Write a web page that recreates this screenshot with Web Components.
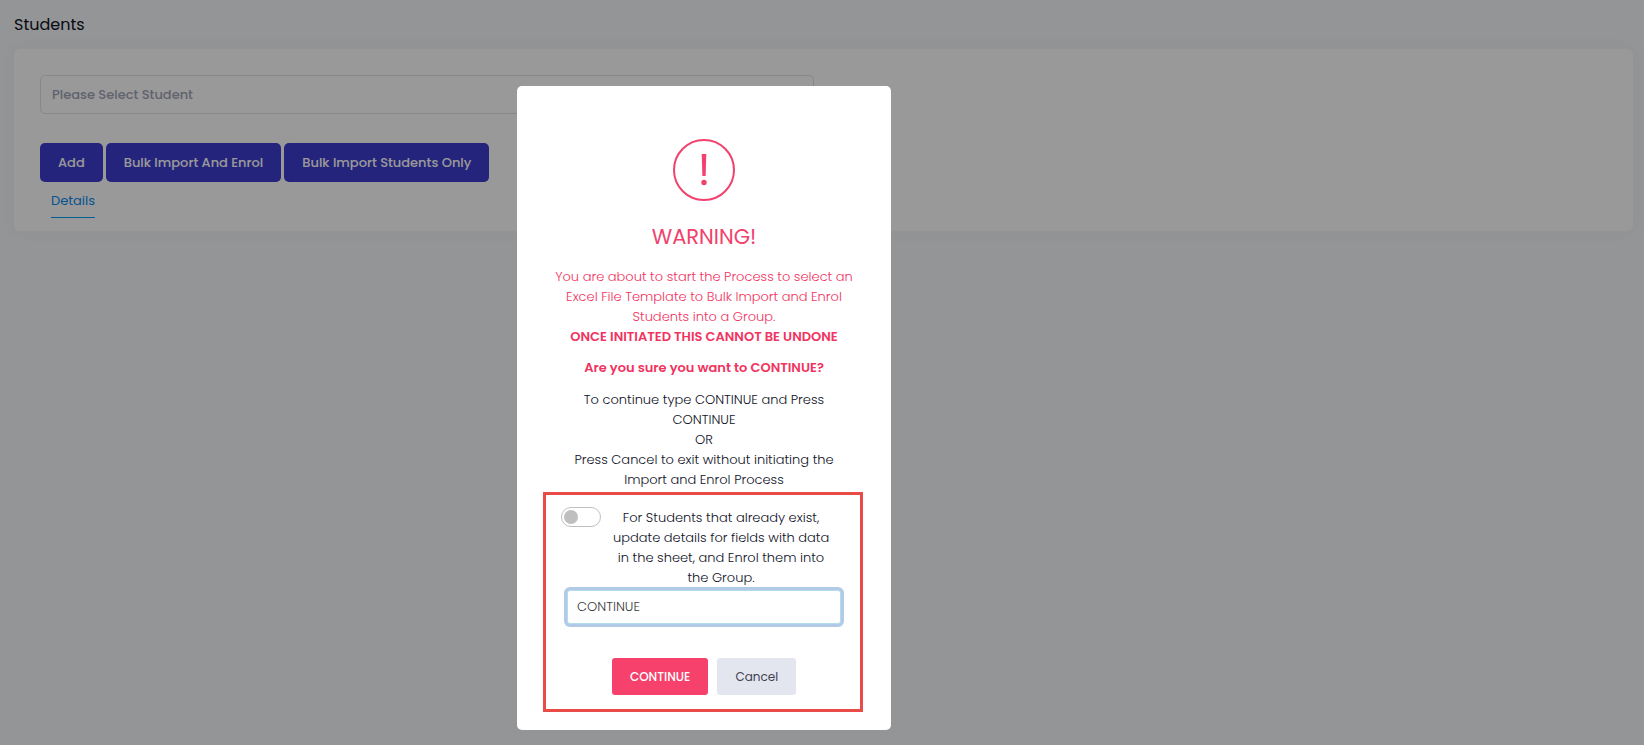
<!DOCTYPE html>
<html lang="en">
<head>
<meta charset="utf-8">
<meta name="viewport" content="width=device-width, initial-scale=1">
<title>Students</title>
<style>
  body { margin: 0; min-height: 100vh; background: #f5f8fa; color: #10121f; font: 400 13px/20px Poppins, Inter, "Open Sans", sans-serif; }
</style>
</head>
<body>
<students-page>
  <app-card>
    <student-select></student-select>
    <nav-actions></nav-actions>
    <detail-tabs></detail-tabs>
  </app-card>
</students-page>
<warning-dialog heading="WARNING!">
  <dialog-message></dialog-message>
  <confirm-panel></confirm-panel>
</warning-dialog>
<script>
const define = (name, html) => customElements.define(name, class extends HTMLElement {
  constructor() {
    super();
    this.attachShadow({ mode: 'open' }).innerHTML = html;
  }
  connectedCallback() {
    const h = this.shadowRoot.querySelector('[data-heading]');
    if (h) h.textContent = this.getAttribute('heading');
  }
});

define('students-page', `
<style>
  :host { display: block; padding: 12px 11px 12px 14px; }
  h1 { margin: 0 0 12px; font-size: 16px; line-height: 25px; font-weight: 400; }
</style>
<h1>Students</h1>
<main><slot></slot></main>`);

define('app-card', `
<style>
  :host { display: flex; flex-direction: column; padding: 26px 26px 13px; border-radius: 6px; background: #fff; box-shadow: 0 0 20px rgba(76,87,125,.03); }
</style>
<slot></slot>`);

define('student-select', `
<style>
  :host { display: block; width: calc(50% - 10px); margin-bottom: 29px; }
  select { appearance: none; box-sizing: border-box; display: block; width: 100%; height: 39px; padding: 0 11px; border: 1px solid #e1e3ea; border-radius: 5px; background: #fff; color: #a1a5b7; font: inherit; font-weight: 500; }
</style>
<select aria-label="Student"><option>Please Select Student</option></select>`);

define('nav-actions', `
<style>
  :host { display: flex; gap: 3px; }
  button { height: 39px; padding: 0 18px; border: 0; border-radius: 5px; background: #3f3dcf; color: #fff; font: inherit; font-weight: 500; }
</style>
<button type="button">Add</button><button type="button">Bulk Import And Enrol</button><button type="button">Bulk Import Students Only</button>`);

define('detail-tabs', `
<style>
  :host { display: flex; padding: 8px 11px 0; }
  a { padding: 1px 0 6px; border-bottom: 1px solid #009ef7; color: #0a8af0; font-weight: 400; text-decoration: none; }
</style>
<a href="#details">Details</a>`);

define('warning-dialog', `
<style>
  :host { position: fixed; inset: 0; display: flex; justify-content: center; align-items: flex-start; padding: 86px 236px 0 0; overflow: auto; background: rgba(0,0,0,.4); }
  section { box-sizing: border-box; width: 374px; padding: 53px 26px 18px; border-radius: 5px; background: #fff; text-align: center; }
  svg { display: block; margin: 0 auto; color: #f1416c; }
  h2 { margin: 21px 0 15px; color: #f1416c; font-size: 21px; line-height: 30px; font-weight: 400; }
</style>
<section role="dialog" aria-modal="true" aria-labelledby="title">
  <svg width="62" height="62" viewBox="0 0 62 62" aria-hidden="true">
    <circle cx="31" cy="31" r="30" fill="none" stroke="currentColor" stroke-width="2"/>
    <path d="M28.7 15h4.6l-.7 22h-3.2z" fill="currentColor"/>
    <circle cx="31" cy="43.5" r="2.7" fill="currentColor"/>
  </svg>
  <h2 id="title" data-heading></h2>
  <slot></slot>
</section>`);

define('dialog-message', `
<style>
  :host { display: block; font-weight: 300; }
  p { margin: 0 0 11px; white-space: nowrap; }
  .question { margin-bottom: 12px; }
  p:last-child { margin-bottom: 2px; }
  .alert { color: #f1335f; }
  strong { font-weight: 600; }
</style>
<p class="alert">You are about to start the Process to select an<br>Excel File Template to Bulk Import and Enrol<br>Students into a Group.<br><strong>ONCE INITIATED THIS CANNOT BE UNDONE</strong></p>
<p class="alert question"><strong>Are you sure you want to CONTINUE?</strong></p>
<p>To continue type CONTINUE and Press<br>CONTINUE<br>OR<br>Press Cancel to exit without initiating the<br>Import and Enrol Process</p>`);

define('confirm-panel', `
<style>
  :host { display: block; box-sizing: border-box; max-width: 320px; padding: 12px 15px 14px; border: 3px solid #e94b46; }
  .option { display: flex; gap: 12px; font-weight: 300; }
  input[type=checkbox] { appearance: none; box-sizing: border-box; flex: none; width: 40px; height: 20px; margin: 0; padding: 2px; border: 1px solid #bfbfbf; border-radius: 10px; background: #fff; }
  input[type=checkbox]::before { content: ""; display: block; width: 14px; height: 14px; border-radius: 50%; background: #bfbfbf; }
  input[type=checkbox]:checked::before { margin-left: auto; background: #3f3dcf; }
  label { display: block; width: 216px; padding-top: 1px; white-space: nowrap; }
  input[type=text] { box-sizing: border-box; display: block; width: calc(100% - 10px); height: 34px; margin: 2px 4px 0 6px; padding: 0 9px; border: 1px solid #b4dbed; border-radius: 3px; outline: 0; box-shadow: 0 0 0 3px #b1cae5; background: #fff; color: #3c3c3c; font: inherit; font-weight: 300; }
  .actions { display: flex; justify-content: center; gap: 9px; margin-top: 34px; padding-left: 2px; }
  button { height: 37px; padding: 0 18px; border: 0; border-radius: 3px; background: #e4e6ef; color: #3f4254; font: inherit; font-size: 12px; }
  .go { background: #f5416c; color: #fff; font-weight: 500; }
</style>
<div class="option">
  <input type="checkbox" id="update">
  <label for="update">For Students that already exist,<br>update details for fields with data<br>in the sheet, and Enrol them into<br>the Group.</label>
</div>
<input type="text" value="CONTINUE" aria-label="Type CONTINUE to confirm">
<div class="actions"><button type="button" class="go">CONTINUE</button><button type="button">Cancel</button></div>`);
</script>
</body>
</html>
